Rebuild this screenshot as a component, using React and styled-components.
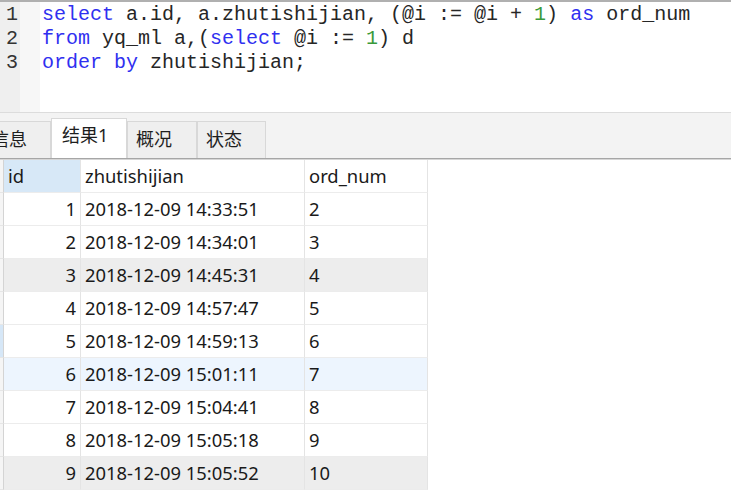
import React from "react";
import styled, { createGlobalStyle } from "styled-components";

const GlobalStyle = createGlobalStyle`
    html, body {
        margin: 0;
        padding: 0;
        background: #ffffff;
        overflow: hidden;
    }
`;

const Page = styled.div`
    width: 731px;
    height: 490px;
    display: flex;
    flex-direction: column;
    overflow: hidden;
    font-family: "Noto Sans", "Noto Sans CJK SC", sans-serif;
`;

const Editor = styled.div`
    height: 110px;
    display: flex;
    border-top: 2px solid #b0b0b0;
    border-bottom: 1px solid #dcdcdc;
    background: #ffffff;
    font-family: "Liberation Mono", monospace;
    font-size: 20px;
    line-height: 24px;
`;

const LineNumbers = styled.div`
    width: 20px;
    padding-top: 1px;
    background: #efefef;
    color: #333333;
    text-indent: 6px;
`;

const FoldMargin = styled.div`
    width: 20px;
    background: #f7f7f7;
`;

const Code = styled.pre`
    margin: 0;
    padding: 1px 0 0 2px;
    font: inherit;
    color: #262626;
    white-space: pre;
`;

const Kw = styled.span`
    color: #3030f0;
`;

const Num = styled.span`
    color: #3a9a3a;
`;

const TabBar = styled.div`
    height: 45px;
    display: flex;
    align-items: flex-end;
    background: #f3f3f3;
    border-bottom: 1px solid #a6a6a6;
    box-shadow: 0 1px 0 #d6d6d6;
    margin-bottom: 1px;
`;

const Tab = styled.div`
    box-sizing: border-box;
    width: ${(p) => p.w}px;
    height: ${(p) => (p.active ? 40 : 37)}px;
    margin-left: ${(p) => p.ml || 0}px;
    padding: ${(p) => (p.active ? "4px 0 0 10px" : "5px 0 0 8px")};
    background: ${(p) => (p.active ? "#ffffff" : "#efefef")};
    border: 1px solid #d8d8d8;
    border-bottom: none;
    font-size: 18px;
    line-height: 24px;
    color: #1e1e1e;
    flex-shrink: 0;
`;

const Grid = styled.div`
    display: flex;
    flex-direction: column;
    align-items: flex-start;
    font-size: 18.4px;
    color: #1a1a1a;
`;

const Row = styled.div`
    display: flex;
    height: 33px;
    background: ${(p) =>
        p.tone === "gray" ? "#ededed" : p.tone === "blue" ? "#edf5fe" : "#ffffff"};
`;

const Cell = styled.div`
    box-sizing: border-box;
    width: ${(p) => p.w}px;
    height: 33px;
    padding: ${(p) => (p.right ? "1px 4px 0 0" : "1px 0 0 4px")};
    display: flex;
    align-items: center;
    justify-content: ${(p) => (p.right ? "flex-end" : "flex-start")};
    border-right: 1px solid #e4e4e4;
    border-bottom: 1px solid #ececec;
    background: ${(p) => p.bg || "transparent"};
    line-height: 1;
    white-space: nowrap;
`;

const Selector = styled.div`
    box-sizing: border-box;
    width: 4px;
    height: 33px;
    border-right: 1px solid #d4d4d4;
    border-bottom: 1px solid #e6e6e6;
    background: ${(p) => (p.hl ? "#d6e7f7" : "#f5f5f5")};
`;

const rows = [
    ["1", "2018-12-09 14:33:51", "2"],
    ["2", "2018-12-09 14:34:01", "3"],
    ["3", "2018-12-09 14:45:31", "4", "gray"],
    ["4", "2018-12-09 14:57:47", "5"],
    ["5", "2018-12-09 14:59:13", "6", null, true],
    ["6", "2018-12-09 15:01:11", "7", "blue"],
    ["7", "2018-12-09 15:04:41", "8"],
    ["8", "2018-12-09 15:05:18", "9"],
    ["9", "2018-12-09 15:05:52", "10", "gray"],
];

export default function App() {
    return (
        <Page>
            <GlobalStyle />
            <Editor>
                <LineNumbers>
                    <div>1</div>
                    <div>2</div>
                    <div>3</div>
                </LineNumbers>
                <FoldMargin />
                <Code>
                    <Kw>select</Kw> a.id, a.zhutishijian, (@i := @i + <Num>1</Num>) <Kw>as</Kw> ord_num
                    {"\n"}
                    <Kw>from</Kw> yq_ml a,(<Kw>select</Kw> @i := <Num>1</Num>) d
                    {"\n"}
                    <Kw>order by</Kw> zhutishijian;
                </Code>
            </Editor>
            <TabBar>
                <Tab w={69} ml={-18}>信息</Tab>
                <Tab w={76} active>结果1</Tab>
                <Tab w={70}>概况</Tab>
                <Tab w={69}>状态</Tab>
            </TabBar>
            <Grid>
                <Row>
                    <Selector />
                    <Cell w={77} bg="#d7e8f7">id</Cell>
                    <Cell w={224}>zhutishijian</Cell>
                    <Cell w={123}>ord_num</Cell>
                </Row>
                {rows.map(([id, time, ord, tone, hl]) => (
                    <Row key={id} tone={tone}>
                        <Selector hl={hl} />
                        <Cell w={77} right>{id}</Cell>
                        <Cell w={224}>{time}</Cell>
                        <Cell w={123}>{ord}</Cell>
                    </Row>
                ))}
            </Grid>
        </Page>
    );
}
